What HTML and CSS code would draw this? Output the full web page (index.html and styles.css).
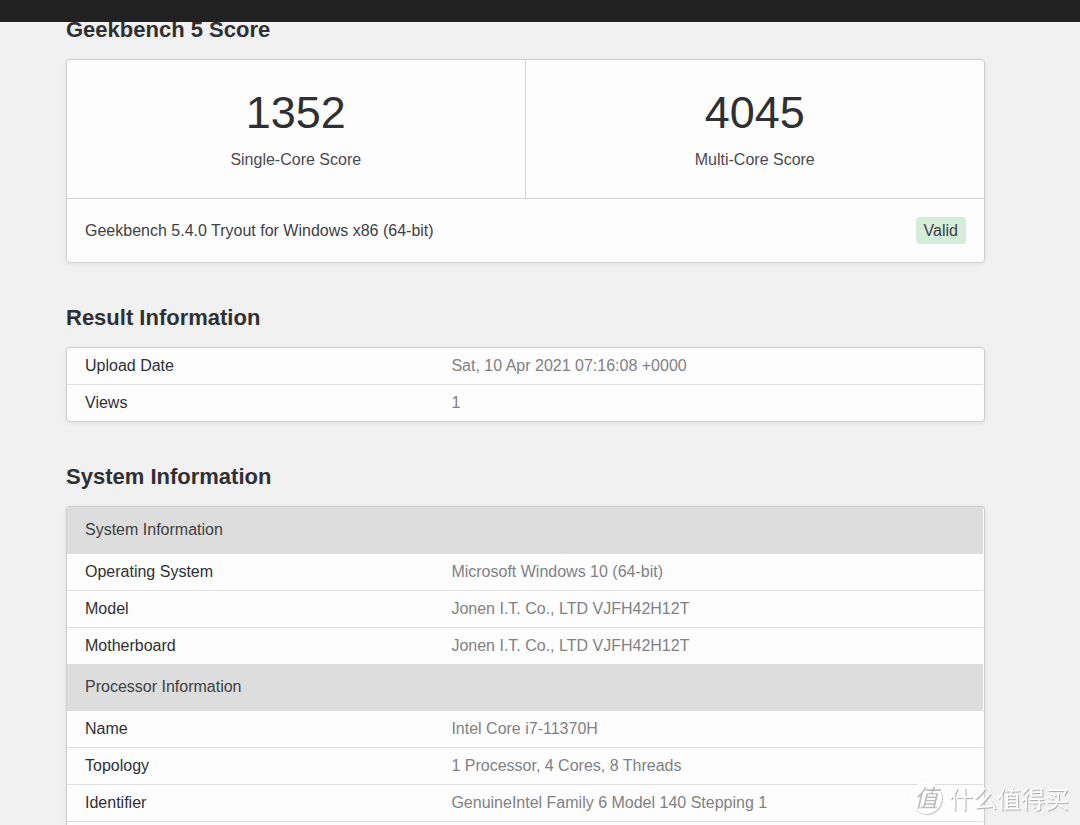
FILE: index.html
```html
<!DOCTYPE html>
<html lang="en">
<head>
<meta charset="utf-8">
<title>Geekbench 5 Score</title>
<link rel="stylesheet" href="styles.css">
</head>
<body>
<header class="navbar"></header>
<main class="container">
  <h2 class="heading">Geekbench 5 Score</h2>
  <section class="card">
    <div class="scores">
      <div class="score-box">
        <div class="score">1352</div>
        <div class="score-label">Single-Core Score</div>
      </div>
      <div class="score-box">
        <div class="score">4045</div>
        <div class="score-label">Multi-Core Score</div>
      </div>
    </div>
    <div class="platform">
      <span>Geekbench 5.4.0 Tryout for Windows x86 (64-bit)</span>
      <span class="badge">Valid</span>
    </div>
  </section>

  <h2 class="heading">Result Information</h2>
  <section class="card card-table">
    <table class="info">
      <colgroup><col class="col-name"><col></colgroup>
      <tbody>
        <tr><th scope="row">Upload Date</th><td>Sat, 10 Apr 2021 07:16:08 +0000</td></tr>
        <tr><th scope="row">Views</th><td>1</td></tr>
      </tbody>
    </table>
  </section>

  <h2 class="heading">System Information</h2>
  <section class="card card-table card-open">
    <table class="info">
      <colgroup><col class="col-name"><col></colgroup>
      <thead><tr><th colspan="2">System Information</th></tr></thead>
      <tbody>
        <tr><th scope="row">Operating System</th><td>Microsoft Windows 10 (64-bit)</td></tr>
        <tr><th scope="row">Model</th><td>Jonen I.T. Co., LTD VJFH42H12T</td></tr>
        <tr><th scope="row">Motherboard</th><td>Jonen I.T. Co., LTD VJFH42H12T</td></tr>
      </tbody>
    </table>
    <table class="info info-open">
      <colgroup><col class="col-name"><col></colgroup>
      <thead><tr><th colspan="2">Processor Information</th></tr></thead>
      <tbody>
        <tr><th scope="row">Name</th><td>Intel Core i7-11370H</td></tr>
        <tr><th scope="row">Topology</th><td>1 Processor, 4 Cores, 8 Threads</td></tr>
        <tr><th scope="row">Identifier</th><td>GenuineIntel Family 6 Model 140 Stepping 1</td></tr>
      </tbody>
    </table>
  </section>
</main>
<div class="watermark" lang="zh-CN">
  <span class="watermark-logo">值</span>
  <span>什么值得买</span>
</div>
</body>
</html>
```

FILE: styles.css
```css
* { box-sizing: border-box; }

body {
  display: flex;
  flex-direction: column;
  min-height: 100vh;
  margin: 0;
  background: #f1f1f1;
  color: #2f3033;
  font: 16px/20px "Liberation Sans", Arial, sans-serif;
}

.navbar {
  position: fixed;
  top: 0;
  left: 0;
  right: 0;
  z-index: 1;
  height: 22px;
  background: #212121;
}

.container {
  flex: 1;
  display: flex;
  flex-direction: column;
  padding: 16px 95px 0 66px;
}

.heading {
  margin: 0 0 15px;
  font-size: 22px;
  line-height: 28px;
  font-weight: bold;
}

.card {
  margin-bottom: 41px;
  background: #fdfdfd;
  border: 1px solid #cfcfcf;
  border-radius: 4px;
  box-shadow: 0 1px 4px rgba(0, 0, 0, 0.08);
}

.card-table { padding-right: 1px; }

.card-open {
  flex: 1;
  margin-bottom: 0;
  border-bottom: 0;
  border-radius: 4px 4px 0 0;
}

.scores {
  display: grid;
  grid-template-columns: 1fr 1fr;
  border-bottom: 1px solid #d6d6d6;
}

.score-box {
  padding: 28px 18px;
  text-align: center;
}

.score-box:first-child { border-right: 1px solid #d6d6d6; }

.score {
  margin-bottom: 12px;
  font-size: 45px;
  line-height: 50px;
}

.score-label { color: #4a4b4e; }

.platform {
  display: flex;
  justify-content: space-between;
  align-items: center;
  padding: 18px;
  color: #3f4043;
}

.badge {
  padding: 3px 8px;
  border-radius: 4px;
  background: #d4edda;
  line-height: 21px;
}

.info {
  width: 100%;
  table-layout: fixed;
  border-collapse: separate;
  border-spacing: 0;
}

.col-name { width: 40%; }

.info th,
.info td {
  padding: 8px 18px;
  text-align: left;
  font-weight: normal;
  border-bottom: 1px solid #dedede;
}

.info td { color: #808184; }

.info:not(.info-open) tbody tr:last-child > * { border-bottom: 0; }

.info thead th {
  padding: 13px 18px;
  background: #dddddd;
  color: #3f4043;
}

.watermark {
  position: fixed;
  right: 11px;
  bottom: 11px;
  z-index: 2;
  display: flex;
  align-items: center;
  gap: 7px;
  color: #fff;
  font: 24px/30px "Noto Sans CJK SC", sans-serif;
  text-shadow: 1px 1px 1px #aaa;
}

.watermark-logo {
  width: 32px;
  height: 32px;
  border-radius: 50%;
  background: #fff;
  box-shadow: 1px 1px 1px #c4c4c4;
  color: #bdbdbd;
  text-align: center;
  text-shadow: none;
  font-style: italic;
}
```
